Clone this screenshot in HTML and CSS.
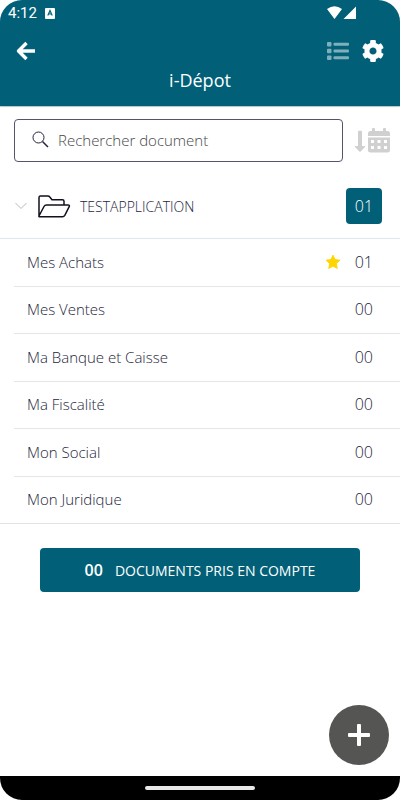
FILE: index.html
```html
<!DOCTYPE html>
<html lang="fr">
<head>
<meta charset="utf-8">
<meta name="viewport" content="width=device-width, initial-scale=1">
<title>i-Dépot</title>
<link rel="stylesheet" href="styles.css">
</head>
<body>
<div class="screen">
  <header class="header">
    <div class="status">
      <span class="clock">4:12</span>
      <svg class="notice" width="10" height="11" viewBox="0 0 10 11" aria-hidden="true"><rect width="10" height="11" rx="1" fill="#fff"/><path d="M2.8 7.6 5 2.6l2.2 5M3.6 6h2.800" fill="none" stroke="#016078" stroke-width="1.200"/></svg>
      <svg class="signal" width="30" height="14" viewBox="0 0 30 14" aria-hidden="true"><path d="M0 3Q7.500-2.500 15 3L7.500 13ZM29 0.500V13H16.500Z" fill="#fff"/></svg>
    </div>
    <div class="toolbar">
      <button class="icon-button" aria-label="Retour"><svg width="20" height="20" viewBox="0 0 20 20"><path d="M19 10H3M10.500 2 2.500 10l8 8" fill="none" stroke="#fff" stroke-width="3.400" stroke-linejoin="round"/></svg></button>
      <div class="actions">
        <button class="icon-button" aria-label="Liste"><svg width="22" height="18" viewBox="0 0 22 18" fill="#80afbb"><rect width="4.500" height="4.500" rx="1"/><rect y="6.750" width="4.500" height="4.500" rx="1"/><rect y="13.500" width="4.500" height="4.500" rx="1"/><rect x="6.500" y=".8" width="15.500" height="3" rx="1"/><rect x="6.500" y="7.500" width="15.500" height="3" rx="1"/><rect x="6.500" y="14.200" width="15.500" height="3" rx="1"/></svg></button>
        <button class="icon-button" aria-label="Paramètres"><svg width="22" height="22" viewBox="8 8 496 496"><path fill="#fff" d="M487.400 315.700l-42.600-24.600c4.300-23.200 4.300-47 0-70.200l42.600-24.600c4.900-2.800 7.100-8.600 5.500-14-11.100-35.600-30-67.800-54.700-94.600-3.800-4.100-10-5.100-14.800-2.300L380.800 110c-17.900-15.400-38.500-27.300-60.800-35.100V25.800c0-5.600-3.900-10.500-9.400-11.700-36.700-8.200-74.300-7.800-109.200 0-5.500 1.200-9.400 6.100-9.400 11.700V75c-22.200 7.900-42.800 19.800-60.800 35.100L88.700 85.500c-4.900-2.800-11-1.900-14.800 2.300-24.700 26.700-43.600 58.900-54.700 94.600-1.700 5.400.6 11.200 5.500 14L67.300 221c-4.300 23.200-4.300 47 0 70.200l-42.600 24.600c-4.900 2.800-7.100 8.600-5.500 14 11.100 35.600 30 67.800 54.700 94.600 3.800 4.100 10 5.100 14.800 2.300l42.600-24.600c17.900 15.400 38.500 27.300 60.800 35.100v49.200c0 5.600 3.900 10.500 9.400 11.700 36.700 8.200 74.300 7.800 109.200 0 5.500-1.200 9.400-6.100 9.400-11.700v-49.200c22.200-7.900 42.800-19.800 60.800-35.100l42.600 24.600c4.900 2.800 11 1.900 14.800-2.300 24.700-26.700 43.600-58.900 54.700-94.600 1.500-5.500-.7-11.300-5.600-14.100zM256 336c-44.100 0-80-35.900-80-80s35.900-80 80-80 80 35.900 80 80-35.900 80-80 80z"/></svg></button>
      </div>
    </div>
    <h1 class="title">i-Dépot</h1>
  </header>

  <main class="main">
    <div class="search-row">
      <label class="search">
        <svg width="17" height="17" viewBox="0 0 17 17" fill="none" stroke="#24243c" aria-hidden="true"><circle cx="6.500" cy="6.500" r="5.500"/><path d="m10.500 10.500 5.500 5.500" stroke-width="1.500"/></svg>
        <input class="search-input" type="text" placeholder="Rechercher document" aria-label="Rechercher document">
      </label>
      <button class="icon-button" aria-label="Trier par date"><svg width="36" height="26" viewBox="0 0 36 26" fill="#d0d0d0"><path d="M4 3.500q0-.8.800-.8h2.400q.8 0 .8.800V18h2.600q1.100 0 .3 1L6.700 23.500q-.7.700-1.400 0L1.100 19q-.8-1 .3-1H4Z"/><path fill-rule="evenodd" d="M14 9.500h22V22q0 2.500-2.500 2.500h-17Q14 24.500 14 22ZM17 12v3h3v-3ZM23.500 12v3h3v-3ZM30 12v3h3v-3ZM17 18v3h3v-3ZM23.500 18v3h3v-3ZM30 18v3h3v-3Z"/><path d="M14 8V5.500Q14 3 16.500 3H18V1q0-1 1-1h1q1 0 1 1v2h8V1q0-1 1-1h1q1 0 1 1v2h1.500Q36 3 36 5.500V8Z"/></svg></button>
    </div>

    <section>
      <button class="folder">
        <svg width="12" height="8" viewBox="0 0 12 8" fill="none" stroke="#b8b8b8" aria-hidden="true"><path d="m.5 1 5.500 5.500L11.500 1"/></svg>
        <svg class="folder-icon" width="34" height="23" viewBox="0 0 34 23" fill="none" stroke="#111120" stroke-width="1.500" stroke-linejoin="round" aria-hidden="true"><path d="M2 21V2.500Q2 1 3.500 1H11q1 0 1.600.8L15 4.800h10.500q1.500 0 1.500 1.500V10M2 21 7 11.500Q7.800 10 9.500 10H31q2 0 1.200 1.600l-4.400 8.800q-.8 1.400-2.300 1.400H3Q1.500 21.800 2 21Z"/></svg>
        <span class="folder-name">TESTAPPLICATION</span>
        <span class="badge">01</span>
      </button>
      <ul class="list">
        <li class="row"><span class="name">Mes Achats</span><svg width="16" height="16" viewBox="0 0 16 16" aria-label="Favori"><path fill="#ffd500" stroke="#ffd500" stroke-linejoin="round" d="m8 1.200 2 4.400 4.900.6-3.600 3.300.9 4.900L8 12l-4.200 2.400.9-4.900L1.100 6.200 6 5.600Z"/></svg><span class="count">01</span></li>
        <li class="row"><span class="name">Mes Ventes</span><span class="count">00</span></li>
        <li class="row"><span class="name">Ma Banque et Caisse</span><span class="count">00</span></li>
        <li class="row"><span class="name">Ma Fiscalité</span><span class="count">00</span></li>
        <li class="row"><span class="name">Mon Social</span><span class="count">00</span></li>
        <li class="row"><span class="name">Mon Juridique</span><span class="count">00</span></li>
      </ul>
    </section>

    <button class="submit"><span class="submit-count">00</span><span>DOCUMENTS PRIS EN COMPTE</span></button>
    <button class="fab" aria-label="Ajouter"><svg width="22" height="22" viewBox="0 0 22 22" fill="#fff"><rect x="9" width="4" height="22" rx="1"/><rect y="9" width="22" height="4" rx="1"/></svg></button>
  </main>

  <footer class="navbar"><span class="handle"></span></footer>
</div>
</body>
</html>
```
FILE: styles.css
```css
* {
  box-sizing: border-box;
}

body {
  margin: 0;
  background: #fff;
  color: #24243c;
  font-family: "Open Sans", "Noto Sans", sans-serif;
  font-weight: 300;
  font-size: 15px;
}

button {
  margin: 0;
  padding: 0;
  border: 0;
  background: none;
  color: inherit;
  font: inherit;
}

svg {
  display: block;
  flex: none;
}

.screen {
  display: flex;
  flex-direction: column;
  min-height: 100vh;
}

.header {
  padding-bottom: 14px;
  border-radius: 22px 22px 0 0;
  background: #016078;
  box-shadow: 0 1px 1px #b4c4ca;
  color: #fff;
}

.status {
  display: flex;
  align-items: center;
  height: 26px;
  padding: 0 43px 0 8px;
}

.clock {
  font: 400 15px Roboto, sans-serif;
}

.notice {
  margin-left: 8px;
}

.signal {
  margin-left: auto;
}

.toolbar {
  display: flex;
  align-items: center;
  justify-content: space-between;
  height: 50px;
  padding: 0 16px;
}

.actions {
  display: flex;
  align-items: center;
  gap: 13px;
}

.title {
  margin: -8px 0 0;
  text-align: center;
  font-size: 18px;
  font-weight: 400;
  line-height: 24px;
}

.main {
  display: flex;
  flex: 1;
  flex-direction: column;
}

.search-row {
  display: flex;
  align-items: center;
  gap: 11px;
  padding: 13px 10px 0 14px;
}

.search {
  display: flex;
  flex: 1;
  align-items: center;
  gap: 9px;
  min-width: 0;
  height: 43px;
  padding: 0 17px 2px;
  border: 1px solid #55556a;
  border-radius: 4px;
}

.search-input {
  flex: 1;
  min-width: 0;
  padding: 0;
  border: 0;
  outline: 0;
  background: none;
  font: inherit;
}

.search-input::placeholder {
  color: #484848;
  opacity: 1;
}

.folder {
  display: flex;
  align-items: center;
  width: 100%;
  height: 77px;
  padding: 12px 18px 0 15px;
  border-bottom: 1px solid #dfe6ee;
}

.folder-icon {
  margin: 0 9px 0 10px;
}

.folder-name {
  font-size: 14px;
}

.badge {
  width: 36px;
  margin-left: auto;
  border-radius: 4px;
  background: #016078;
  color: #fff;
  font-size: 16px;
  line-height: 36px;
  text-align: center;
}

.list {
  margin: 0;
  padding: 0 0 0 14px;
  border-bottom: 1px solid #dfe3ea;
  list-style: none;
}

.row {
  display: flex;
  align-items: center;
  gap: 14px;
  height: 48px;
  padding: 0 27px 2px 13px;
  border-bottom: 1px solid #e6e6e8;
}

.row:nth-child(even) {
  height: 47px;
}

.row:last-child {
  height: 46px;
  border-bottom: 0;
}

.name {
  flex: 1;
}

.count {
  font-size: 16px;
}

.submit {
  display: flex;
  align-items: center;
  justify-content: center;
  gap: 12px;
  height: 44px;
  margin: 24px 40px;
  border-radius: 4px;
  background: #016078;
  color: #fff;
  font-size: 14px;
  font-weight: 400;
}

.submit-count {
  font-size: 16px;
  font-weight: 600;
}

.fab {
  display: grid;
  place-items: center;
  width: 60px;
  height: 60px;
  margin: auto 11px 11px auto;
  border-radius: 50%;
  background: #555553;
}

.navbar {
  display: grid;
  place-items: center;
  height: 24px;
  border-radius: 0 0 22px 22px;
  background: #000;
}

.handle {
  width: 110px;
  height: 4px;
  border-radius: 2px;
  background: #e8e8e8;
}
```
